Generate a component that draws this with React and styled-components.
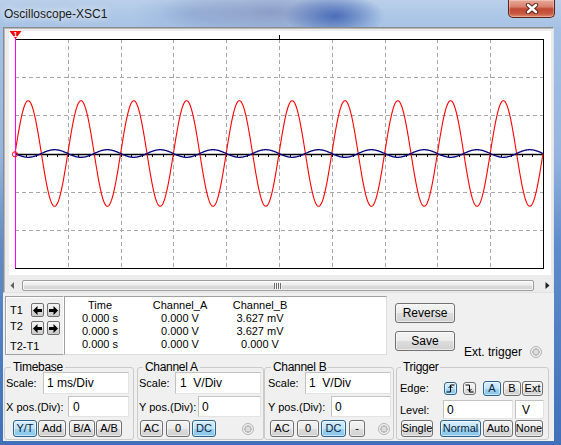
import React from "react";
import styled, { createGlobalStyle } from "styled-components";

const GlobalStyle = createGlobalStyle`
  html, body {
    margin: 0;
    padding: 0;
  }
  body {
    font-family: "Liberation Sans", Arial, sans-serif;
    font-size: 11px;
    color: #000;
    background: #4a78bd;
  }
  * {
    box-sizing: border-box;
  }
`;

// plot geometry (inside the white well, 542 x 244)
const PW = 542;
const PH = 244;
const X0 = 6;
const X1 = 534;
const Y0 = 8;
const Y1 = 237;
const CX = (X1 - X0) / 10;
const CY = (Y1 - Y0) / 6;
const MID = Y0 + 3 * CY;

const trace = (amp) => {
  const pts = [];
  for (let x = X0; x <= X1; x += 0.5) {
    const y = MID - amp * Math.sin((2 * Math.PI * (x - X0)) / CX);
    pts.push(`${x.toFixed(1)},${y.toFixed(2)}`);
  }
  return pts.join(" ");
};

function Plot() {
  const vlines = [];
  for (let i = 1; i < 10; i++) {
    const x = Math.round(X0 + i * CX) + 0.5;
    vlines.push(<line key={"v" + i} x1={x} y1={Y0} x2={x} y2={Y1} />);
  }
  const hlines = [];
  for (let j = 1; j < 6; j++) {
    if (j === 3) continue;
    const y = Math.round(Y0 + j * CY) + 0.5;
    hlines.push(<line key={"h" + j} x1={X0} y1={y} x2={X1} y2={y} />);
  }
  const ticks = [];
  for (let k = 1; k < 50; k++) {
    const x = Math.round(X0 + (k * CX) / 5) + 0.5;
    ticks.push(<line key={"t" + k} x1={x} y1={MID} x2={x} y2={MID + 3} />);
  }
  const mid = Math.round(MID) + 0.5;
  return (
    <svg width={PW} height={PH} viewBox={`0 0 ${PW} ${PH}`}>
      <g stroke="#a8a8a8" strokeWidth="1" strokeDasharray="4 3" shapeRendering="crispEdges">
        {vlines}
        {hlines}
      </g>
      <rect x={X0 + 0.5} y={Y0 + 0.5} width={X1 - X0} height={Y1 - Y0} fill="none" stroke="#000" strokeWidth="1" shapeRendering="crispEdges" />
      <line x1={270.5} y1={Y0 - 4} x2={270.5} y2={Y0} stroke="#000" shapeRendering="crispEdges" />
      <line x1={X0} y1={mid} x2={X1} y2={mid} stroke="#000" strokeWidth="1.6" />
      <g stroke="#000" strokeWidth="1" shapeRendering="crispEdges">{ticks}</g>
      <polyline points={trace(52.8)} fill="none" stroke="#ff0000" strokeWidth="1.1" />
      <polyline points={trace(-3.8)} fill="none" stroke="#000080" strokeWidth="1.3" />
      <line x1={6.5} y1={7} x2={6.5} y2={Y1} stroke="#ff00ff" strokeWidth="1" />
      <circle cx={6} cy={MID + 0.8} r={2.6} fill="none" stroke="#ff0000" strokeWidth="1" />
      <polygon points="0.5,0 12.5,0 6.5,8" fill="#ff0000" />
      <text x={6.5} y={6} fontSize="7" fontWeight="bold" fill="#fff" textAnchor="middle" fontFamily="Liberation Sans, Arial, sans-serif">1</text>
    </svg>
  );
}

function ArrowIcon({ dir }) {
  return (
    <svg width="9" height="9" viewBox="0 0 9 9">
      <path
        d="M0 4.5 L4.5 0 V3 H9 V6 H4.5 V9 Z"
        fill="#000"
        transform={dir === "right" ? "translate(9 0) scale(-1 1)" : undefined}
      />
    </svg>
  );
}

function EdgeIcon({ falling }) {
  return (
    <svg width="9" height="9" viewBox="0 0 9 9">
      <path
        d={falling ? "M0.5 1 H4.5 V8 H8.5" : "M0.5 8 H4.5 V1 H8.5"}
        fill="none"
        stroke="#000"
        strokeWidth="1"
      />
      <path d={falling ? "M2.5 5 L4.5 7 L6.5 5" : "M2.5 4 L4.5 2 L6.5 4"} fill="none" stroke="#000" strokeWidth="1" />
    </svg>
  );
}

function CloseGlyph() {
  return (
    <svg width="14" height="11" viewBox="0 0 14 11">
      <path d="M3 2 L11 9 M11 2 L3 9" stroke="#5a1f17" strokeWidth="4.4" strokeLinecap="round" />
      <path d="M3 2 L11 9 M11 2 L3 9" stroke="#fff" strokeWidth="2.6" strokeLinecap="round" />
    </svg>
  );
}

export default function App() {
  return (
    <>
      <GlobalStyle />
      <Window>
        <TitleBar>
          <Title>Oscilloscope-XSC1</Title>
          <CloseButton>
            <CloseGlyph />
          </CloseButton>
        </TitleBar>
        <Body>
          <ScreenBox>
            <PlotWell>
              <Plot />
            </PlotWell>
            <ScrollBar>
              <ScrollArrow>
                <svg width="5" height="7" viewBox="0 0 5 7">
                  <polygon points="4,0 4,7 0.5,3.5" fill="#606060" />
                </svg>
              </ScrollArrow>
              <Thumb>
                <Grip />
              </Thumb>
              <ScrollArrow $right>
                <svg width="5" height="7" viewBox="0 0 5 7">
                  <polygon points="0.5,0 0.5,7 4.5,3.5" fill="#202020" />
                </svg>
              </ScrollArrow>
            </ScrollBar>
          </ScreenBox>

          <MeasureRow>
            <CursorBox>
              <CursorRow>
                <CursorLabel>T1</CursorLabel>
                <ArrowBtn><ArrowIcon dir="left" /></ArrowBtn>
                <ArrowBtn><ArrowIcon dir="right" /></ArrowBtn>
              </CursorRow>
              <CursorRow $mt={4}>
                <CursorLabel $up>T2</CursorLabel>
                <ArrowBtn><ArrowIcon dir="left" /></ArrowBtn>
                <ArrowBtn><ArrowIcon dir="right" /></ArrowBtn>
              </CursorRow>
              <CursorRow $mt={4}>
                <CursorLabel>T2-T1</CursorLabel>
              </CursorRow>
            </CursorBox>
            <ValuesBox>
              <span>Time</span>
              <span>Channel_A</span>
              <span>Channel_B</span>
              <span>0.000 s</span>
              <span>0.000 V</span>
              <span>3.627 mV</span>
              <span>0.000 s</span>
              <span>0.000 V</span>
              <span>3.627 mV</span>
              <span>0.000 s</span>
              <span>0.000 V</span>
              <span>0.000 V</span>
            </ValuesBox>
            <ButtonsCol>
              <Btn $w={60} $h={20}>Reverse</Btn>
              <Btn $w={60} $h={20}>Save</Btn>
            </ButtonsCol>
            <ExtTrigger>
              <span>Ext. trigger</span>
              <Radio $ml={8} $mr={0} />
            </ExtTrigger>
          </MeasureRow>

          <GroupsRow>
            <Group $ml={1} $w={130} $pl={1} $pr={4}>
              <Legend $lm={5}>Timebase</Legend>
              <Row $h={22} $mt={-1}>
                <span>Scale:</span>
                <Field $w={86} $pad={3}>1 ms/Div</Field>
              </Row>
              <Row $h={21} $mt={2}>
                <span>X pos.(Div):</span>
                <Field $w={61} $pad={4}>0</Field>
              </Row>
              <Row $h={17} $mt={3}>
                <Btn $w={24} $ml={7} $on>Y/T</Btn>
                <Btn $w={28} $ml={1}>Add</Btn>
                <Btn $w={26} $ml={3}>B/A</Btn>
                <Btn $w={26} $ml={1}>A/B</Btn>
              </Row>
            </Group>

            <Group $ml={3} $w={127} $pl={1} $pr={2}>
              <Legend $lm={4}>Channel A</Legend>
              <Row $h={22} $mt={-1}>
                <span>Scale:</span>
                <Field $w={86} $pad={4}>1  V/Div</Field>
              </Row>
              <Row $h={21} $mt={2}>
                <span>Y pos.(Div):</span>
                <Field $w={63} $pad={3}>0</Field>
              </Row>
              <Row $h={17} $mt={3}>
                <Btn $w={23} $ml={1}>AC</Btn>
                <Btn $w={24} $ml={3}>0</Btn>
                <Btn $w={24} $ml={2} $on>DC</Btn>
                <Radio $mr={7} />
              </Row>
            </Group>

            <Group $ml={0} $w={130} $pl={3} $pr={2}>
              <Legend $lm={3}>Channel B</Legend>
              <Row $h={22} $mt={-1}>
                <span>Scale:</span>
                <Field $w={86} $pad={3}>1  V/Div</Field>
              </Row>
              <Row $h={21} $mt={2}>
                <span>Y pos.(Div):</span>
                <Field $w={60} $pad={3}>0</Field>
              </Row>
              <Row $h={17} $mt={3}>
                <Btn $w={24} $ml={2}>AC</Btn>
                <Btn $w={22} $ml={3}>0</Btn>
                <Btn $w={25} $ml={2} $on>DC</Btn>
                <Btn $w={16} $ml={3}>-</Btn>
                <Radio $mr={1} />
              </Row>
            </Group>

            <Group $ml={2} $w={153} $pl={3} $pr={4}>
              <Legend $lm={1}>Trigger</Legend>
              <Row $h={20} $mt={5}>
                <Label $w={44}>Edge:</Label>
                <Btn $w={13} $h={13} $on><EdgeIcon /></Btn>
                <Btn $w={13} $h={13} $ml={6}><EdgeIcon falling /></Btn>
                <Btn $w={18} $h={15} $ml={7} $on>A</Btn>
                <Btn $w={18} $h={15} $ml={2}>B</Btn>
                <Btn $w={21} $h={15} $ml={1}>Ext</Btn>
              </Row>
              <Row $h={19} $mt={2}>
                <Label $w={43}>Level:</Label>
                <Field $w={70} $ml={0} $pad={3}>0</Field>
                <Field $w={29} $ml={2} $pad={6}>V</Field>
              </Row>
              <Row $h={17} $mt={1}>
                <Btn $w={32} $ml={1}>Single</Btn>
                <Btn $w={41} $ml={7} $on>Normal</Btn>
                <Btn $w={30} $ml={2}>Auto</Btn>
                <Btn $w={28} $ml={2}>None</Btn>
              </Row>
            </Group>
          </GroupsRow>
        </Body>
      </Window>
    </>
  );
}

const Window = styled.div`
  width: 561px;
  height: 445px;
  display: flex;
  flex-direction: column;
  overflow: hidden;
  background: linear-gradient(180deg, #a9c3e6 0%, #94b4df 35%, #5f8cca 55%, #4070b9 100%);
`;

const TitleBar = styled.div`
  flex: none;
  height: 27px;
  display: flex;
  align-items: flex-start;
  background:
    radial-gradient(ellipse 50px 22px at 335px 16px, rgba(38, 78, 170, 0.7), rgba(38, 78, 170, 0)),
    radial-gradient(ellipse 110px 26px at 270px 12px, rgba(96, 104, 160, 0.45), rgba(96, 104, 160, 0)),
    radial-gradient(ellipse 60px 20px at 190px 14px, rgba(120, 150, 200, 0.35), rgba(120, 150, 200, 0)),
    linear-gradient(180deg, #b9cfea 0%, #a6c2e5 100%);
`;

const Title = styled.div`
  margin: 6px 0 0 4px;
  font-size: 12px;
  line-height: 16px;
  color: #1a1a1a;
  text-shadow: 0 0 6px rgba(255, 255, 255, 0.9), 0 0 12px rgba(255, 255, 255, 0.7);
`;

const CloseButton = styled.div`
  margin-left: auto;
  margin-right: 6px;
  width: 47px;
  height: 18px;
  display: flex;
  align-items: center;
  justify-content: center;
  border: 1px solid #5c2219;
  border-top: none;
  border-radius: 0 0 5px 5px;
  background: linear-gradient(180deg, #e8a898 0%, #d8806c 40%, #c24a33 52%, #c65540 78%, #de8a6b 100%);
  box-shadow: inset 0 0 0 1px rgba(255, 255, 255, 0.3);
`;

const Body = styled.div`
  flex: 1;
  margin: 0 7px 4px 3px;
  background: #f0f0f0;
  display: flex;
  flex-direction: column;
`;

const ScreenBox = styled.div`
  height: 266px;
  border: 1px solid;
  border-color: #8a8a8a #e2e2e2 #e2e2e2 #8a8a8a;
  padding: 3px 2px 1px 5px;
  background: #ececec;
  box-shadow: inset 1px 1px 0 #b8b8b8;
`;

const PlotWell = styled.div`
  width: 542px;
  height: 244px;
  background: #fff;
  svg {
    display: block;
  }
`;

const ScrollBar = styled.div`
  display: flex;
  height: 11px;
  margin: 5px -1px 0 -2px;
`;

const ScrollArrow = styled.div`
  flex: none;
  width: ${(p) => (p.$right ? 18 : 15)}px;
  display: flex;
  align-items: center;
  padding-left: ${(p) => (p.$right ? 11 : 3)}px;
`;

const Thumb = styled.div`
  flex: 1;
  display: flex;
  align-items: center;
  justify-content: center;
  border: 1px solid #9c9c9c;
  border-radius: 2px;
  background: linear-gradient(180deg, #f6f6f6 0%, #ececec 45%, #dcdcdc 55%, #d2d2d2 100%);
  box-shadow: inset 0 0 0 1px rgba(255, 255, 255, 0.7);
`;

const Grip = styled.div`
  width: 8px;
  height: 6px;
  background: repeating-linear-gradient(90deg, #6e6e6e 0 1px, #f4f4f4 1px 2px);
`;

const MeasureRow = styled.div`
  display: flex;
  align-items: flex-start;
  height: 62px;
  margin-top: 3px;
  padding-left: 2px;
`;

const CursorBox = styled.div`
  width: 59px;
  height: 59px;
  padding: 6px 0 0 4px;
  border: 1px solid;
  border-color: #a0a0a0 #ffffff #a0a0a0 #a0a0a0;
  box-shadow: inset 1px 1px 0 #ffffff;
`;

const CursorRow = styled.div`
  display: flex;
  align-items: center;
  height: 14px;
  margin-top: ${(p) => p.$mt || 0}px;
`;

const CursorLabel = styled.span`
  width: 21px;
  font-size: 11px;
  white-space: nowrap;
  margin-top: ${(p) => (p.$up ? -4 : 0)}px;
`;

const ArrowBtn = styled.div`
  width: 13px;
  height: 14px;
  margin-right: 3px;
  display: flex;
  align-items: center;
  justify-content: center;
  border: 1px solid #707070;
  border-radius: 2px;
  background: linear-gradient(180deg, #f4f4f4 0%, #e8e8e8 50%, #d8d8d8 51%, #cccccc 100%);
`;

const ValuesBox = styled.div`
  width: 323px;
  height: 59px;
  background: #fff;
  border: 1px solid;
  border-color: #a0a0a0 #dcdcdc #dcdcdc #a0a0a0;
  display: grid;
  grid-template-columns: 70px 90px 70px;
  grid-auto-rows: 13px;
  justify-items: center;
  align-content: start;
  padding-top: 2px;
  line-height: 13px;
  white-space: nowrap;
`;

const ButtonsCol = styled.div`
  display: flex;
  flex-direction: column;
  gap: 8px;
  margin-left: 8px;
  padding-top: 7px;
`;

const ExtTrigger = styled.div`
  align-self: flex-end;
  display: flex;
  align-items: center;
  height: 12px;
  margin-left: 9px;
  font-size: 12px;
  white-space: nowrap;
`;

const Btn = styled.button`
  flex: none;
  width: ${(p) => p.$w}px;
  height: ${(p) => p.$h || 17}px;
  margin-left: ${(p) => p.$ml || 0}px;
  padding: 0;
  display: flex;
  align-items: center;
  justify-content: center;
  font-family: "Liberation Sans", Arial, sans-serif;
  font-size: ${(p) => (p.$h === 20 ? 12 : 11)}px;
  line-height: 1;
  color: ${(p) => (p.$on ? "#0b1e3c" : "#000")};
  border: 1px solid ${(p) => (p.$on ? "#2c628b" : "#707070")};
  border-radius: 3px;
  background: ${(p) =>
    p.$on
      ? "linear-gradient(180deg, #d6eefb 0%, #bfe3f7 50%, #9fd3f0 51%, #86c5ea 100%)"
      : "linear-gradient(180deg, #f4f4f4 0%, #ebebeb 50%, #dddddd 51%, #d0d0d0 100%)"};
  box-shadow: inset 0 0 0 1px rgba(255, 255, 255, 0.55);
`;

const Radio = styled.div`
  flex: none;
  width: 12px;
  height: 12px;
  margin-left: ${(p) => (p.$ml !== undefined ? `${p.$ml}px` : "auto")};
  margin-right: ${(p) => p.$mr}px;
  border-radius: 50%;
  border: 1px solid #b4b4b4;
  background: radial-gradient(circle, #dedede 0 2px, #bcbcbc 2.5px 3.5px, #f2f2f2 4px);
`;

const GroupsRow = styled.div`
  display: flex;
  margin-top: 3px;
`;

const Group = styled.fieldset`
  display: flex;
  flex-direction: column;
  min-width: 0;
  width: ${(p) => p.$w}px;
  height: 79px;
  margin: 0 0 0 ${(p) => p.$ml}px;
  padding: 0 ${(p) => p.$pr}px 2px ${(p) => p.$pl}px;
  border: 1px solid #cbcbcb;
  border-radius: 3px;
`;

const Legend = styled.legend`
  margin-left: ${(p) => p.$lm}px;
  padding: 0 2px;
  font-size: 12px;
  line-height: 12px;
  letter-spacing: -0.3px;
`;

const Row = styled.div`
  display: flex;
  align-items: center;
  height: ${(p) => p.$h}px;
  margin-top: ${(p) => p.$mt}px;
  white-space: nowrap;
  font-size: 11px;
`;

const Label = styled.span`
  flex: none;
  width: ${(p) => p.$w}px;
`;

const Field = styled.div`
  flex: none;
  width: ${(p) => p.$w}px;
  height: 100%;
  margin-left: ${(p) => (p.$ml !== undefined ? `${p.$ml}px` : "auto")};
  padding-left: ${(p) => p.$pad}px;
  display: flex;
  align-items: center;
  white-space: pre;
  background: #fff;
  border: 1px solid;
  border-color: #c2c2c2 #e3e3e3 #e3e3e3 #c2c2c2;
  font-size: 12px;
`;
